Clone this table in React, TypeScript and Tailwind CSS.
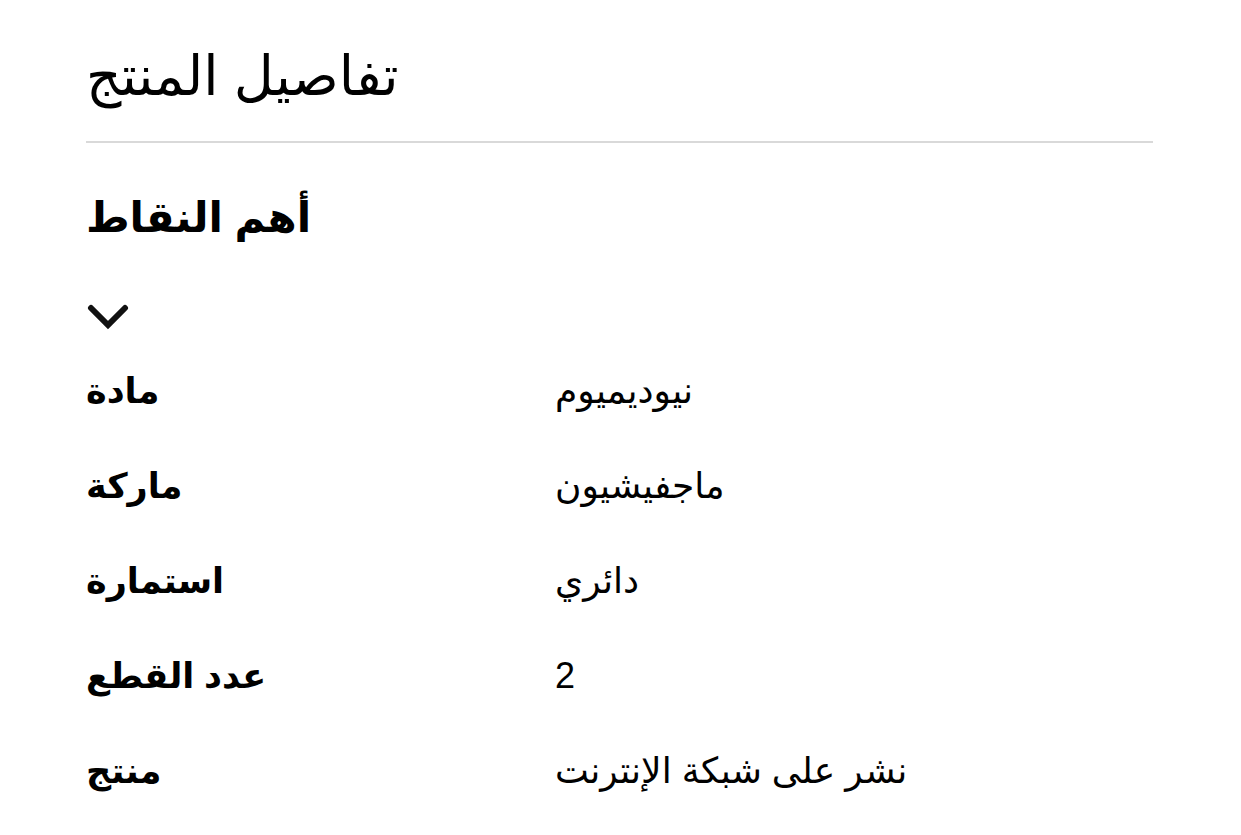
import React from "react";

const rows: [string, string][] = [
  ["مادة", "نيوديميوم"],
  ["ماركة", "ماجفيشيون"],
  ["استمارة", "دائري"],
  ["عدد القطع", "2"],
  ["منتج", "نشر على شبكة الإنترنت"],
];

export default function App() {
  return (
    <div
      className="w-[1241px] h-[835px] bg-white text-black overflow-hidden pl-[86px] pr-[88px] pt-[40px]"
      style={{ fontFamily: '"Liberation Sans", "DejaVu Sans", sans-serif' }}
    >
      <h1 className="text-[55px] leading-[72px] font-normal">
        <span dir="rtl">تفاصيل المنتج</span>
      </h1>
      <div className="mt-[29px] h-[2px] bg-[#d9d9d9]" />
      <h2 className="mt-[50px] text-[42px] leading-[50px] font-bold">
        <span dir="rtl">أهم النقاط</span>
      </h2>
      <div className="mt-[57px] h-[34px] flex items-center pl-[1px]">
        <svg width="42" height="28" viewBox="0 0 42 28" fill="none" className="shrink-0">
          <path d="M4 5 L21 22 L38 5" stroke="#111" strokeWidth="6" strokeLinecap="round" strokeLinejoin="miter" />
        </svg>
      </div>
      <div className="mt-[37px] flex flex-col">
        {rows.map(([k, v]) => (
          <div key={k} className="grid grid-cols-[469px_1fr] h-[95px] items-start">
            <div className="text-[35px] leading-[40px] font-bold">
              <span dir="rtl">{k}</span>
            </div>
            <div className="text-[36px] leading-[40px]">
              <span dir="rtl">{v}</span>
            </div>
          </div>
        ))}
      </div>
    </div>
  );
}
